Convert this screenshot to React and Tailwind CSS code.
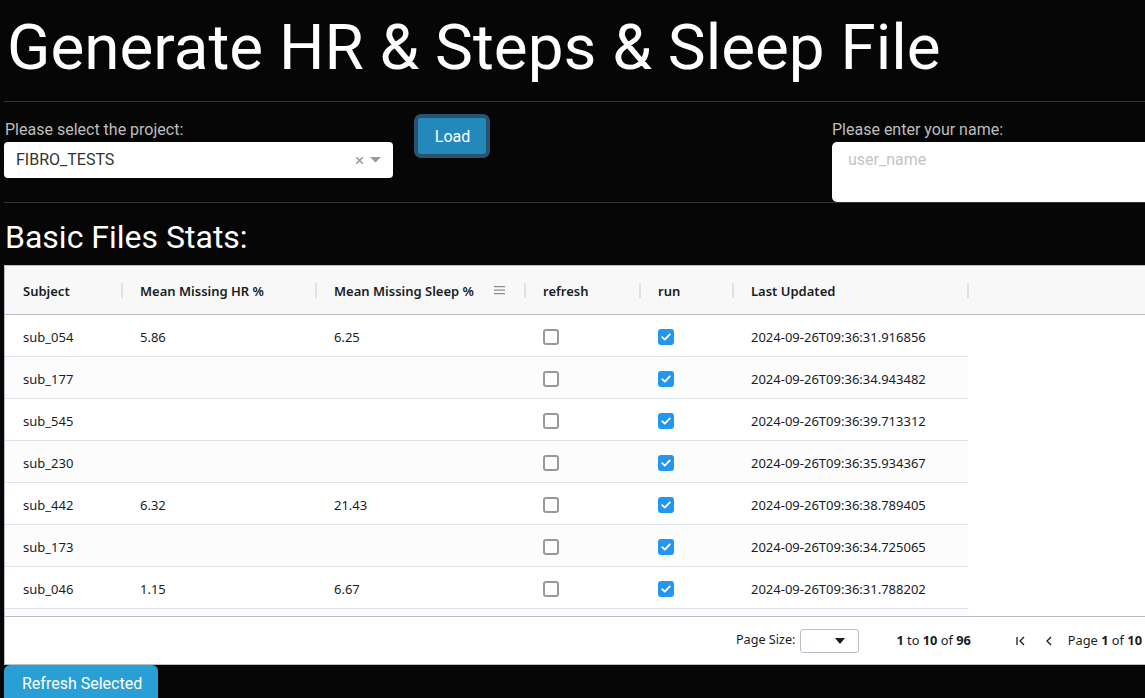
import React from "react";

const cols = [
  { key: "subject", label: "Subject", w: "w-[117px]" },
  { key: "hr", label: "Mean Missing HR %", w: "w-[194px]" },
  { key: "sleep", label: "Mean Missing Sleep %", w: "w-[209px]", menu: true },
  { key: "refresh", label: "refresh", w: "w-[115px]" },
  { key: "run", label: "run", w: "w-[93px]" },
  { key: "updated", label: "Last Updated", w: "w-[235px]" },
];

const rows = [
  ["sub_054", "5.86", "6.25", "2024-09-26T09:36:31.916856"],
  ["sub_177", "", "", "2024-09-26T09:36:34.943482"],
  ["sub_545", "", "", "2024-09-26T09:36:39.713312"],
  ["sub_230", "", "", "2024-09-26T09:36:35.934367"],
  ["sub_442", "6.32", "21.43", "2024-09-26T09:36:38.789405"],
  ["sub_173", "", "", "2024-09-26T09:36:34.725065"],
  ["sub_046", "1.15", "6.67", "2024-09-26T09:36:31.788202"],
  ["sub_101", "", "", "2024-09-26T09:36:33.120044"],
];

function Unchecked() {
  return <div className="w-[16px] h-[16px] rounded-[3px] border-2 border-[#999] bg-white" />;
}

function Checked() {
  return (
    <div className="w-[16px] h-[16px] rounded-[3px] bg-[#2196f3] flex items-center justify-center">
      <svg width="12" height="12" viewBox="0 0 12 12">
        <polyline points="2.2,6.2 4.8,8.7 9.8,3.4" fill="none" stroke="white" strokeWidth="1.8" strokeLinecap="round" strokeLinejoin="round" />
      </svg>
    </div>
  );
}

function Cell({ w, children, className = "" }) {
  return (
    <div className={`${w} shrink-0 pl-[18px] pr-[18px] flex items-center h-full ${className}`}>{children}</div>
  );
}

export default function App() {
  return (
    <div className="w-[1145px] h-[698px] overflow-hidden bg-[#060606] font-['Roboto',sans-serif]">
      <h1 className="pt-[10px] pl-[7px] text-[63.8px] leading-[75px] text-white whitespace-nowrap">
        Generate HR &amp; Steps &amp; Sleep File
      </h1>
      <div className="mt-[16px] ml-[4px] border-t border-[#333]" />

      <div className="flex items-start">
        <div className="ml-[4px] mt-[16px] w-[389px] shrink-0">
          <div className="pl-[1px] text-[16px] leading-[24px] text-[#bdbdbd]">Please select the project:</div>
          <div className="h-[36px] bg-white rounded-[4px] flex items-center pl-[12px] pr-[10px]">
            <span className="text-[16px] text-[#333] flex-1">FIBRO_TESTS</span>
            <span className="text-[#999] text-[17px] leading-none mr-[6px]">×</span>
            <svg width="11" height="6" viewBox="0 0 11 6" className="mr-[2px]">
              <polygon points="0,0 11,0 5.5,5.5" fill="#999" />
            </svg>
          </div>
        </div>
        <button className="ml-[21px] mt-[12px] w-[76px] h-[44px] shrink-0 rounded-[7px] border-[4px] border-[#29546f] bg-[#2388ba] text-white text-[16px] leading-none pt-[1px] pl-[1px]">
          Load
        </button>
        <div className="ml-[342px] mt-[16px] shrink-0">
          <div className="text-[16px] leading-[24px] text-[#bdbdbd]">Please enter your name:</div>
          <div className="w-[340px] h-[60px] bg-white rounded-[5px] pl-[16px] pt-[6px] text-[16px] leading-[24px] text-[#c4c4c4]">
            user_name
          </div>
        </div>
      </div>
      <div className="ml-[4px] border-t border-[#333]" />

      <h2 className="mt-[15px] pl-[5px] text-[32px] leading-[38px] text-white">Basic Files Stats:</h2>

      <div className="mt-[9px] ml-[4px] w-[1240px] border border-[#babfc7] bg-white font-['Noto_Sans',sans-serif] text-[#181d1f]">
        <div className="h-[49px] bg-[#f8f8f8] border-b border-[#babfc7] flex">
          {cols.map((c) => (
            <div key={c.key} className={`${c.w} shrink-0 relative flex items-center pl-[18px] pr-[18px] pt-[3px] h-full`}>
              <span className="text-[13px] font-semibold whitespace-nowrap flex-1">{c.label}</span>
              {c.menu && (
                <svg width="12" height="10" viewBox="0 0 12 10" className="mr-[1px] mb-[3px]">
                  <rect x="0" y="1" width="11" height="1.2" fill="#8c8c8c" />
                  <rect x="0" y="4.5" width="11" height="1.2" fill="#8c8c8c" />
                  <rect x="0" y="8" width="11" height="1.2" fill="#8c8c8c" />
                </svg>
              )}
              <div className="absolute right-[-1px] top-[17px] w-[2px] h-[15px] bg-[#dde2eb]" />
            </div>
          ))}
        </div>

        <div className="h-[301px] overflow-hidden">
          {rows.map((r, i) => (
            <div
              key={r[0]}
              className={`w-[963px] h-[42px] border-b border-[#dde2eb] flex text-[13px] ${i % 2 ? "bg-[#fcfcfc]" : "bg-white"}`}
            >
              <Cell w="w-[117px]" className="pt-[4px]">{r[0]}</Cell>
              <Cell w="w-[194px]" className="pt-[4px]">{r[1]}</Cell>
              <Cell w="w-[209px]" className="pt-[4px]">{r[2]}</Cell>
              <Cell w="w-[115px]" className="pt-[2px]"><Unchecked /></Cell>
              <Cell w="w-[93px]" className="pt-[2px]"><Checked /></Cell>
              <Cell w="w-[235px]" className="whitespace-nowrap pt-[4px]">{r[3]}</Cell>
            </div>
          ))}
        </div>

        <div className="h-[48px] border-t border-[#babfc7] flex items-center text-[13px] whitespace-nowrap">
          <span className="ml-[731px] text-[12.6px]">Page Size:</span>
          <div className="ml-[5px] w-[59px] h-[24px] border border-[#babfc7] rounded-[3px] bg-white flex items-center justify-end pr-[13px]">
            <svg width="10" height="6" viewBox="0 0 10 6">
              <polygon points="0,0 10,0 5,6" fill="#181d1f" />
            </svg>
          </div>
          <span className="ml-[37px] text-[12.8px]">
            <b>1</b> to <b>10</b> of <b>96</b>
          </span>
          <svg width="12" height="12" viewBox="0 0 12 12" className="ml-[44px]">
            <path d="M2 2v8" stroke="#181d1f" strokeWidth="1.3" fill="none" />
            <path d="M9 2L5 6l4 4" stroke="#181d1f" strokeWidth="1.3" fill="none" />
          </svg>
          <svg width="12" height="12" viewBox="0 0 12 12" className="ml-[16px]">
            <path d="M8 2L4 6l4 4" stroke="#181d1f" strokeWidth="1.3" fill="none" />
          </svg>
          <span className="ml-[13px] text-[12.8px]">
            Page <b>1</b> of <b>10</b>
          </span>
        </div>
      </div>

      <button className="ml-[4px] h-[38px] pl-[18px] pr-[16px] rounded-t-[6px] bg-[#2a9fd6] text-white text-[16px] leading-none flex items-start pt-[11px]">
        Refresh Selected
      </button>
    </div>
  );
}
